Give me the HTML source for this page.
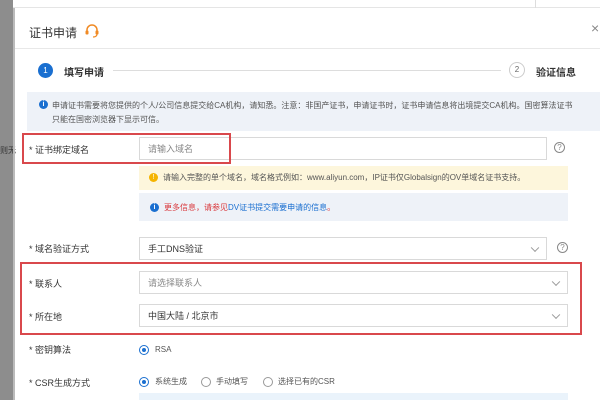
<!DOCTYPE html>
<html><head><meta charset="utf-8"><style>
*{margin:0;padding:0;box-sizing:border-box}
body{width:600px;height:400px;overflow:hidden;background:#fff;font-family:"Liberation Sans","Noto Sans CJK SC",sans-serif;font-size:9px;color:#333;position:relative}
.a{position:absolute}
.lbl{position:absolute;left:29px;font-size:9px;color:#333}
.inp{position:absolute;border:1px solid #d9d9d9;background:#fff;font-size:9px;color:#888;padding-left:8px;display:flex;align-items:center}
.chev{position:absolute;right:8px;top:50%;width:6px;height:6px;border-right:1px solid #999;border-bottom:1px solid #999;transform:translateY(-70%) rotate(45deg)}
.q{position:absolute;width:11px;height:11px;border:1px solid #888;border-radius:50%;font-size:8px;color:#888;text-align:center;line-height:9px}
.rad{position:absolute;width:10px;height:10px;border:1px solid #999;border-radius:50%;background:#fff}
.rad.on{border-color:#1a6fd0}
.rad.on:after{content:"";position:absolute;left:2px;top:2px;width:4px;height:4px;border-radius:50%;background:#1a6fd0}
.red{position:absolute;border:2px solid #d9484c}
</style></head><body>
<div class="a" style="left:0;top:0;width:13px;height:400px;background:#8d8d8d"></div>
<div class="a" style="left:0;top:145px;font-size:8px;color:#333">则无</div>
<div class="a" style="left:13px;top:0;width:587px;height:8px;background:#fff;border-bottom:1px solid #e5e5e5"></div>
<div class="a" style="left:535px;top:0;width:1px;height:8px;background:#ddd"></div>
<div class="a" style="left:13px;top:8px;width:2px;height:392px;background:#bbb"></div>
<div class="a" style="left:29px;top:24px;font-size:12px;color:#333">证书申请</div>
<svg class="a" style="left:84px;top:24px" width="16" height="14" viewBox="0 0 16 14"><path d="M3 8V6a5 5 0 0 1 10 0v2" fill="none" stroke="#f08a24" stroke-width="1.5"/><rect x="1.5" y="6.5" width="3" height="4" rx="1" fill="#f08a24"/><rect x="11.5" y="6.5" width="3" height="4" rx="1" fill="#f08a24"/><path d="M13 10q0 3-4 3" fill="none" stroke="#f08a24" stroke-width="1.2"/></svg>
<div class="a" style="left:591px;top:20px;font-size:14px;color:#888">×</div>
<div class="a" style="left:15px;top:48px;width:585px;height:1px;background:#e8e8e8"></div>
<div class="a" style="left:38px;top:63px;width:15px;height:15px;border-radius:50%;background:#1a6fd0;color:#fff;font-size:8px;text-align:center;line-height:15px">1</div>
<div class="a" style="left:64px;top:64px;font-size:10px;font-weight:bold;color:#333">填写申请</div>
<div class="a" style="left:113px;top:70px;width:388px;height:1px;background:#ddd"></div>
<div class="a" style="left:509px;top:62px;width:16px;height:16px;border-radius:50%;border:1px solid #ccc;color:#666;font-size:8px;text-align:center;line-height:14px">2</div>
<div class="a" style="left:536px;top:64px;font-size:10px;font-weight:bold;color:#333">验证信息</div>
<div class="a" style="left:27px;top:92px;width:573px;height:39px;background:#eef2f8"></div>
<div class="a" style="left:39px;top:100px;width:9px;height:9px;border-radius:50%;background:#1a6fd0;color:#fff;font-size:7px;text-align:center;line-height:9px;font-weight:bold">i</div>
<div class="a" style="left:52px;top:99px;font-size:8px;color:#555;line-height:14px;width:545px;white-space:nowrap">申请证书需要将您提供的个人/公司信息提交给CA机构，请知悉。注意：非国产证书，申请证书时，证书申请信息将出境提交CA机构。国密算法证书<br>只能在国密浏览器下显示可信。</div>
<div class="lbl" style="top:143px">* 证书绑定域名</div>
<div class="inp" style="left:139px;top:137px;width:408px;height:23px">请输入域名</div>
<div class="red" style="left:22px;top:133px;width:209px;height:31px"></div>
<div class="q" style="left:554px;top:142px">?</div>
<div class="a" style="left:139px;top:166px;width:429px;height:24px;background:#fdf6dc"></div>
<div class="a" style="left:149px;top:173px;width:9px;height:9px;border-radius:50%;background:#f5b400;color:#fff;font-size:7px;text-align:center;line-height:9px">!</div>
<div class="a" style="left:163px;top:172px;font-size:8px;color:#555;white-space:nowrap">请输入完整的单个域名，域名格式例如：www.aliyun.com，IP证书仅Globalsign的OV单域名证书支持。</div>
<div class="a" style="left:139px;top:193px;width:429px;height:28px;background:#eef2f8"></div>
<div class="a" style="left:150px;top:203px;width:9px;height:9px;border-radius:50%;background:#1a6fd0;color:#fff;font-size:7px;text-align:center;line-height:9px;font-weight:bold">i</div>
<div class="a" style="left:164px;top:202px;font-size:8px;color:#d9383c;white-space:nowrap">更多信息，请参见<span style="color:#1a6fd0">DV证书提交需要申请的信息</span>。</div>
<div class="lbl" style="top:242px">* 域名验证方式</div>
<div class="inp" style="left:139px;top:237px;width:408px;height:23px;color:#333">手工DNS验证<span class="chev"></span></div>
<div class="q" style="left:557px;top:242px">?</div>
<div class="lbl" style="top:277px">* 联系人</div>
<div class="inp" style="left:139px;top:271px;width:429px;height:23px">请选择联系人<span class="chev"></span></div>
<div class="lbl" style="top:310px">* 所在地</div>
<div class="inp" style="left:139px;top:304px;width:429px;height:23px;color:#333">中国大陆 / 北京市<span class="chev"></span></div>
<div class="red" style="left:20px;top:262px;width:562px;height:73px"></div>
<div class="lbl" style="top:343px">* 密钥算法</div>
<div class="rad on" style="left:139px;top:345px"></div>
<div class="a" style="left:155px;top:345px;font-size:8px;color:#555">RSA</div>
<div class="lbl" style="top:376px">* CSR生成方式</div>
<div class="rad on" style="left:139px;top:377px"></div>
<div class="a" style="left:155px;top:376px;font-size:8px;color:#555">系统生成</div>
<div class="rad" style="left:201px;top:377px"></div>
<div class="a" style="left:216px;top:376px;font-size:8px;color:#555">手动填写</div>
<div class="rad" style="left:263px;top:377px"></div>
<div class="a" style="left:278px;top:376px;font-size:8px;color:#555">选择已有的CSR</div>
<div class="a" style="left:139px;top:393px;width:429px;height:7px;background:#eaf3fb"></div>
</body></html>
